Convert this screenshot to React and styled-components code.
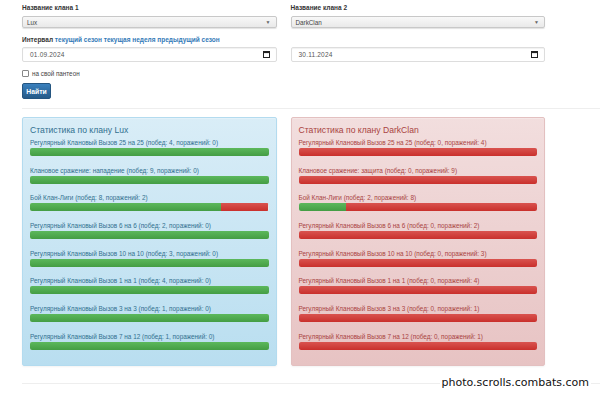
import styled, { createGlobalStyle } from "styled-components";

const GlobalStyle = createGlobalStyle`
  body {
    margin: 0;
    background: #fff;
    font-family: "Liberation Sans", Arial, sans-serif;
    color: #333;
  }
`;

const Page = styled.div`
  position: relative;
  width: 600px;
  height: 393px;
  overflow: hidden;
  padding: 3px 0 0 22px;
  box-sizing: border-box;
`;

const Container = styled.div`
  width: 523px;
`;

const FormGrid = styled.div`
  display: grid;
  grid-template-columns: 1fr 1fr;
  column-gap: 14px;
  row-gap: 7px;
`;

const Field = styled.div`
  display: flex;
  flex-direction: column;
`;

const Label = styled.div`
  font-size: 6.5px;
  line-height: 10px;
  font-weight: bold;
  color: #333;
  margin-bottom: ${(p) => p.$gap || 3}px;
  min-height: 10px;
  white-space: nowrap;
`;

const Link = styled.span`
  color: #337ab7;
`;

const Select = styled.div`
  height: 12px;
  box-sizing: border-box;
  border: 1px solid #c8c8c8;
  border-radius: 2px;
  background: linear-gradient(#f8f8f8, #e9e9e9);
  box-shadow: 0 1px 1px rgba(0, 0, 0, 0.12);
  display: flex;
  align-items: center;
  justify-content: space-between;
  padding: 0 5px 0 4px;
  font-size: 6.3px;
  color: #444;
`;

const Caret = styled.span`
  font-size: 5px;
  color: #666;
`;

const DateInput = styled.div`
  height: 15px;
  box-sizing: border-box;
  border: 1px solid #ddd;
  border-radius: 2px;
  background: #fff;
  box-shadow: inset 0 1px 1px rgba(0, 0, 0, 0.06);
  display: flex;
  align-items: center;
  justify-content: space-between;
  padding: 0 6px 0 7px;
  font-size: 6.5px;
  color: #555;
  letter-spacing: 0.2px;
`;

const CheckRow = styled.label`
  display: flex;
  align-items: center;
  gap: 3px;
  margin-top: 6px;
  height: 10px;
  font-size: 6.3px;
  color: #444;
`;

const CheckBox = styled.span`
  width: 5px;
  height: 5px;
  border: 1px solid #888;
  border-radius: 1px;
  background: #fff;
`;

const Button = styled.div`
  margin-top: 5px;
  width: 29px;
  height: 16px;
  box-sizing: border-box;
  border: 1px solid #245580;
  border-radius: 2px;
  background: linear-gradient(#3a80bd, #265a88);
  color: #fff;
  font-size: 6.8px;
  font-weight: bold;
  display: flex;
  align-items: center;
  justify-content: center;
`;

const Rule = styled.div`
  height: 1px;
  background: #eee;
  margin: ${(p) => p.$m};
  width: 578px;
`;

const Panels = styled.div`
  display: grid;
  grid-template-columns: 1fr 1fr;
  column-gap: 14px;
`;

const Panel = styled.div`
  box-sizing: border-box;
  height: 249px;
  padding: 7px 7px;
  border-radius: 2px;
  border: 1px solid ${(p) => (p.$red ? "#e3c0c0" : "#b3dbef")};
  background: ${(p) =>
    p.$red
      ? "linear-gradient(#f2dede, #e7c3c3)"
      : "linear-gradient(#d9edf7, #b9def0)"};
  color: ${(p) => (p.$red ? "#a94442" : "#31708f")};
  box-shadow: inset 0 1px 0 rgba(255, 255, 255, 0.25), 0 1px 2px rgba(0, 0, 0, 0.05);
`;

const PanelTitle = styled.div`
  font-size: 8.6px;
  line-height: 11px;
  margin-bottom: 2px;
`;

const Row = styled.div`
  margin-bottom: 9.7px;
`;

const RowLabel = styled.div`
  font-size: 6.4px;
  line-height: 10px;
  white-space: nowrap;
`;

const Progress = styled.div`
  height: 8px;
  display: flex;
  border-radius: 2px;
  overflow: hidden;
  background: linear-gradient(#ebebeb, #f5f5f5);
  box-shadow: inset 0 1px 2px rgba(0, 0, 0, 0.1);
`;

const Bar = styled.div`
  height: 100%;
  background: ${(p) =>
    p.$win
      ? "linear-gradient(#5cb85c, #449d44)"
      : "linear-gradient(#d9534f, #c9302c)"};
`;

const Watermark = styled.div`
  position: absolute;
  right: 9px;
  bottom: 3px;
  padding: 0 2px;
  background: #fff;
  color: #111;
  font-family: "DejaVu Sans", sans-serif;
  font-size: 11px;
  line-height: 14px;
`;

const CalendarIcon = () => (
  <svg width="7" height="7" viewBox="0 0 7 7">
    <rect x="0.5" y="0.5" width="6" height="6" fill="none" stroke="#222" strokeWidth="1" />
    <rect x="0.5" y="0.5" width="6" height="1.6" fill="#222" />
  </svg>
);

const lux = [
  ["Регулярный Клановый Вызов 25 на 25", 4, 0],
  ["Клановое сражение: нападение", 9, 0],
  ["Бой Клан-Лиги", 8, 2],
  ["Регулярный Клановый Вызов 6 на 6", 2, 0],
  ["Регулярный Клановый Вызов 10 на 10", 3, 0],
  ["Регулярный Клановый Вызов 1 на 1", 4, 0],
  ["Регулярный Клановый Вызов 3 на 3", 1, 0],
  ["Регулярный Клановый Вызов 7 на 12", 1, 0],
];

const dark = [
  ["Регулярный Клановый Вызов 25 на 25", 0, 4],
  ["Клановое сражение: защита", 0, 9],
  ["Бой Клан-Лиги", 2, 8],
  ["Регулярный Клановый Вызов 6 на 6", 0, 2],
  ["Регулярный Клановый Вызов 10 на 10", 0, 3],
  ["Регулярный Клановый Вызов 1 на 1", 0, 4],
  ["Регулярный Клановый Вызов 3 на 3", 0, 1],
  ["Регулярный Клановый Вызов 7 на 12", 0, 1],
];

function StatsPanel({ name, rows, red }) {
  return (
    <Panel $red={red}>
      <PanelTitle>Статистика по клану {name}</PanelTitle>
      {rows.map(([title, w, l]) => {
        const pct = (w / (w + l)) * 100;
        return (
          <Row key={title}>
            <RowLabel>
              {title} (побед: {w}, поражений: {l})
            </RowLabel>
            <Progress>
              {w > 0 && <Bar $win style={{ width: `${pct}%` }} />}
              {l > 0 && <Bar style={{ width: `${100 - pct}%` }} />}
            </Progress>
          </Row>
        );
      })}
    </Panel>
  );
}

export default function App() {
  return (
    <Page>
      <GlobalStyle />
      <Container>
        <FormGrid>
          <Field>
            <Label>Название клана 1</Label>
            <Select>
              Lux <Caret>▼</Caret>
            </Select>
          </Field>
          <Field>
            <Label>Название клана 2</Label>
            <Select>
              DarkClan <Caret>▼</Caret>
            </Select>
          </Field>
          <Field>
            <Label $gap={2}>
              Интервал <Link>текущий сезон</Link> <Link>текущая неделя</Link>{" "}
              <Link>предыдущий сезон</Link>
            </Label>
            <DateInput>
              01.09.2024 <CalendarIcon />
            </DateInput>
          </Field>
          <Field>
            <Label $gap={2} />
            <DateInput>
              30.11.2024 <CalendarIcon />
            </DateInput>
          </Field>
        </FormGrid>
        <CheckRow>
          <CheckBox />
          на свой пантеон
        </CheckRow>
        <Button>Найти</Button>
      </Container>
      <Rule $m="9px 0 8px 0" />
      <Container>
        <Panels>
          <StatsPanel name="Lux" rows={lux} />
          <StatsPanel name="DarkClan" rows={dark} red />
        </Panels>
      </Container>
      <Rule $m="17px 0 0 0" />
      <Watermark>photo.scrolls.combats.com</Watermark>
    </Page>
  );
}
